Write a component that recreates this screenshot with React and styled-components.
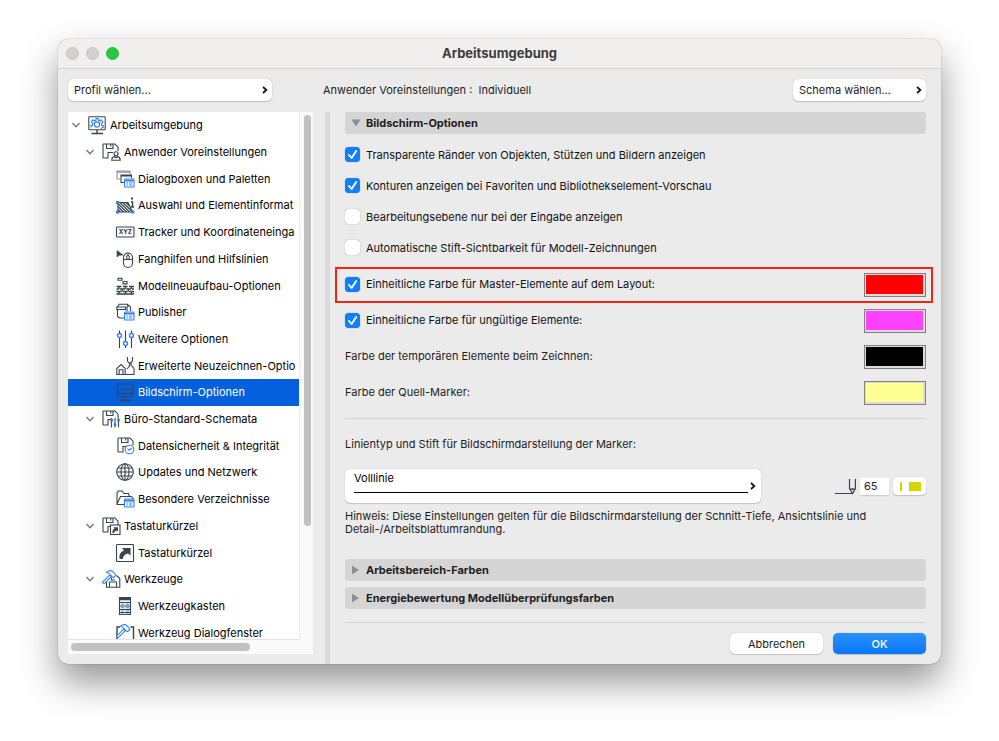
import React, { useState } from 'react'
import styled, { createGlobalStyle } from 'styled-components'

const TEXT_COLOR = '#1d1d1d'
const PANEL_COLOR = '#ebebeb'
const BAR_COLOR = '#d5d5d5'
const LINE_COLOR = '#d3d3d3'
const SELECT_COLOR = '#0560de'
const INK = '#37454c'
const BLUE = '#2f80f7'

const GlobalStyle = createGlobalStyle`
    *{
        box-sizing: border-box;
    }
    body{
        margin: 0;
        background-color: white;
        color: ${TEXT_COLOR};
        font-family: Inter, 'Liberation Sans', sans-serif;
        font-size: 11px;
    }
    button, input, select{
        font: inherit;
        color: inherit;
    }
    ul{
        list-style: none;
        margin: 0;
        padding: 0;
    }
`
const Desktop = styled.div`
    padding: 39px 58px 77px 58px;
`
const Window = styled.main`
    background-color: ${PANEL_COLOR};
    border-radius: 10px;
    overflow: hidden;
    box-shadow: 0 0 1px rgba(0, 0, 0, 0.6), 0 18px 36px rgba(0, 0, 0, 0.42);
`
const TitleBar = styled.header`
    display: grid;
    grid-template-columns: 1fr auto 1fr;
    align-items: center;
    height: 30px;
    padding: 0 8px;
    background-color: #f1efee;
    border-bottom: 1px solid ${LINE_COLOR};

    h1{
        margin: 0;
        padding-bottom: 2px;
        font-size: 13px;
        font-weight: 700;
        color: #3c3c3c;
    }
`
const Lights = styled.div`
    display: flex;
    gap: 7px;
`
const Light = styled.button`
    width: 13px;
    height: 13px;
    padding: 0;
    border-radius: 50%;
    border: 1px solid ${props => props.$on ? '#25bb3c' : '#c4c3c2'};
    background-color: ${props => props.$on ? '#28c840' : '#d3d1d0'};
`
const TopBar = styled.div`
    display: flex;
    align-items: center;
    height: 43px;
    padding: 0 15px 2px 10px;
`
const SelectWrap = styled.div`
    display: grid;
    align-items: center;
    width: ${props => props.$width};
    height: 22px;
    border-radius: 5px;
    background-color: white;
    box-shadow: 0 0 1px rgba(0, 0, 0, 0.3), 0 1px 1px rgba(0, 0, 0, 0.15);

    select, svg{
        grid-area: 1 / 1;
    }
    select{
        appearance: none;
        width: 100%;
        height: 100%;
        border: none;
        background: none;
        padding: 0 20px 0 6px;
    }
    svg{
        justify-self: end;
        margin-right: 4px;
        pointer-events: none;
    }
`
const TopText = styled.span`
    flex: 1;
    padding-left: 51px;
`
const Body = styled.div`
    display: flex;
`
const Sidebar = styled.nav`
    display: grid;
    grid-template-columns: 1fr 14px;
    align-self: flex-start;
    width: 245px;
    margin: 0 12px 10px 10px;
    background-color: #fafafa;
`
const TreeView = styled.div`
    height: 528px;
    overflow: hidden;
    background-color: white;
    border-bottom: 1px solid #e4e4e4;
`
const Tree = styled.ul`
    display: grid;
    grid-auto-rows: 1fr;
    height: 534px;
`
const TreeRow = styled.button`
    display: flex;
    align-items: center;
    gap: 4px;
    width: 100%;
    height: 100%;
    border: none;
    padding: 0 0 0 ${props => 4 + props.$level * 14}px;
    background-color: ${props => props.$selected ? SELECT_COLOR : 'transparent'};
    color: ${props => props.$selected ? 'white' : 'black'};
    white-space: nowrap;
    text-align: left;
`
const Toggle = styled.span`
    display: flex;
    flex: none;
    width: 12px;
`
const Glyph = styled.svg`
    flex: none;
    width: 18px;
    height: 18px;
    overflow: visible;
    fill: none;
    stroke: ${INK};
    stroke-width: 1.1;
`
const VerticalBar = styled.div`
    padding: 3px 2px 0 4px;
    border-left: 1px solid #ececec;

    div{
        height: 411px;
        border-radius: 4px;
        background-color: #c1c1c1;
    }
`
const HorizontalBar = styled.div`
    grid-column: 1 / 3;
    height: 14px;
    padding: 3px;

    div{
        width: 179px;
        height: 8px;
        border-radius: 4px;
        background-color: #c1c1c1;
    }
`
const Splitter = styled.div`
    width: 5px;
    background-color: #dadada;
`
const Content = styled.section`
    flex: 1;
    min-width: 0;
    padding: 0 15px 10px 15px;
`
const SectionButton = styled.button`
    display: flex;
    align-items: center;
    gap: 5px;
    width: 100%;
    height: 22px;
    padding: 0 6px;
    border: none;
    border-radius: 3px;
    background-color: ${BAR_COLOR};
    font-weight: 700;
`
const CheckList = styled.div`
    padding: 5px 0 4px 0;
`
const CheckRow = styled.label`
    display: flex;
    align-items: center;
    gap: 6px;
    height: 31px;
    color: #111;
`
const CheckBox = styled.input`
    appearance: none;
    flex: none;
    width: 15px;
    height: 15px;
    margin: 0;
    border-radius: 4px;
    background-color: white;
    box-shadow: 0 0 1px rgba(0, 0, 0, 0.5);

    &:checked{
        background: url("data:image/svg+xml,%3Csvg xmlns='http://www.w3.org/2000/svg' viewBox='0 0 15 15'%3E%3Cpath d='M4 8l2.600 3L11.200 4' fill='none' stroke='white' stroke-width='1.900' stroke-linecap='round' stroke-linejoin='round'/%3E%3C/svg%3E"), #0f80fb;
    }
`
const ColorRow = styled.div`
    display: flex;
    align-items: center;
    justify-content: space-between;
    height: 36px;
    ${props => props.$marked && `
        margin: 0 -7px 0 -10px;
        padding: 0 5px 0 8px;
        border: 2px solid #f52313;
    `}

    label{
        padding-bottom: 2px;
    }
`
const Swatch = styled.input`
    appearance: none;
    width: 62px;
    height: 24px;
    padding: 1px 2px 2px 1px;
    border: 1px solid #808080;
    background-color: #dcdcdc;

    &::-webkit-color-swatch-wrapper{
        padding: 0;
    }
    &::-webkit-color-swatch{
        border: none;
    }
`
const Divider = styled.hr`
    height: 1px;
    border: none;
    margin: ${props => props.$gap} 0 0 0;
    background-color: ${LINE_COLOR};
`
const LineLabel = styled.p`
    margin: 17px 0;
    line-height: 16px;
`
const LineRow = styled.div`
    display: flex;
    align-items: center;
    gap: 74px;
`
const LineButton = styled.button`
    display: flex;
    align-items: center;
    gap: 2px;
    flex: 1;
    height: 34px;
    padding: 0 5px 0 9px;
    border: none;
    border-radius: 5px;
    background-color: white;
    box-shadow: 0 0 1px rgba(0, 0, 0, 0.3), 0 1px 1px rgba(0, 0, 0, 0.15);
    color: black;
    text-align: left;

    span{
        flex: 1;
        padding-bottom: 7px;
        margin-bottom: 8px;
        border-bottom: 1px solid black;
        line-height: 14px;
    }
`
const PenGroup = styled.div`
    display: flex;
    align-items: center;
    gap: 4px;
`
const PenInput = styled.input`
    width: 29px;
    height: 17px;
    padding: 0 4px;
    border: none;
    background-color: white;
    box-shadow: 0 1px 1px rgba(0, 0, 0, 0.12);
`
const PenButton = styled.button`
    display: flex;
    align-items: center;
    justify-content: flex-end;
    gap: 7px;
    width: 33px;
    height: 18px;
    padding: 0 5px;
    border: none;
    border-radius: 4px;
    background-color: white;
    box-shadow: 0 0 1px rgba(0, 0, 0, 0.3), 0 1px 1px rgba(0, 0, 0, 0.15);
`
const PenColor = styled.span`
    width: ${props => props.$width};
    height: 9px;
    background-color: #d8d400;
`
const Hint = styled.p`
    margin: 7px 0 23px 0;
    line-height: 13px;
`
const SectionGroup = styled.div`
    display: flex;
    flex-direction: column;
    gap: 6px;
`
const Footer = styled.footer`
    display: flex;
    justify-content: flex-end;
    gap: 10px;
    padding-top: 10px;
`
const FooterButton = styled.button`
    width: 93px;
    height: 21px;
    border: none;
    border-radius: 5px;
    background: ${props => props.$primary ? 'linear-gradient(#2a90ff, #0a78fb)' : 'white'};
    color: ${props => props.$primary ? 'white' : TEXT_COLOR};
    font-weight: ${props => props.$primary ? 500 : 400};
    box-shadow: 0 0 1px rgba(0, 0, 0, 0.3), 0 1px 1px rgba(0, 0, 0, 0.15);
`

const Chevron = () => (
    <svg width='6' height='8' viewBox='0 0 6 8' fill='none' stroke='#111' strokeWidth='1.7'>
        <path d='M1 1l3.400 3L1 7' />
    </svg>
)

const Triangle = ({ open }) => (
    <svg width='10' height='10' viewBox='0 0 10 10' fill='#8b9094'>
        <path d={open ? 'M0.500 1.500h9L5 8.500z' : 'M1 0.500v9L8 5z'} />
    </svg>
)

const Floppy = () => (
    <path d='M16 8V4.200L13 1H1.600Q1 1 1 1.600V14.400Q1 15 1.600 15H6V9.500H11M4.500 1V5.500H11V1M8.800 1V3.500' />
)

const BlueWindow = () => (
    <g stroke={BLUE} fill='#fff'>
        <rect x='8.500' y='9' width='9.500' height='8' rx='0.800' />
        <path d='M8.500 10.600H18' strokeWidth='1.800' />
        <path d='M10.300 13h1.500M12.800 13h3.500M10.300 15h1.500M12.800 15h3.500' />
    </g>
)

const Hammer = () => (
    <g stroke={BLUE} fill='#fff'>
        <path d='M7.700 5.200L0.500 12.200L2 13.800L9.300 6.700z' />
        <path d='M4.500 2.200Q7.500 -0.500 10.500 1.300L13.300 4.200L13.800 5.500L11.700 7.600L10.300 7L7 3.600Q5.800 2.500 4.500 2.200z' />
    </g>
)

const GLYPHS = {
    monitorGear: (
        <>
            <rect x='0.800' y='0.800' width='16.400' height='13' rx='0.800' />
            <path d='M9 14v3.500M3.500 17.500h11.500' strokeWidth='1.400' />
            <g stroke={BLUE}>
                <circle cx='9' cy='8.500' r='2.600' />
                <path d='M3 11.500V9.500H4.500L5 7.500L3.300 6L5 3.800L6.800 5L8 4.300V2.500H10.300V4.300L11.500 5L13 3.800L15 6L13.300 7.500L13.700 9.500H15.200V11.500L13.500 12L13 13' />
            </g>
        </>
    ),
    floppyUser: (
        <>
            <Floppy />
            <circle cx='14' cy='10.700' r='2' fill='#fff' />
            <path d='M9.800 17.200Q9.600 14 12.500 13.600L14 14.800L15.500 13.600Q18.300 14 18.200 17.200z' fill='#fff' />
        </>
    ),
    dialogs: (
        <>
            <path d='M4 9H1V1H14V4' stroke='#8b9497' />
            <path d='M1 2h13' stroke='#8b9497' strokeWidth='1.600' />
            <path d='M8 12.500H5V5H15.500V8' />
            <path d='M5 5.800h10.500' strokeWidth='1.600' />
            <BlueWindow />
        </>
    ),
    hatch: (
        <>
            <path d='M1.500 6.500H12L16.500 16H2V6.500' />
            <path d='M2 13.500L4.500 16M2 10.500L7.500 16M2 7.500L10.500 16M4 6.500L13.500 16M7 6.500L16 15.500M10 6.500L14 10.500' strokeWidth='1.200' />
            <path d='M16.500 5.500v5.500M15 5.800h1.500M15 11h3' strokeWidth='1.500' />
            <path d='M16 1.500v2' strokeWidth='2' />
            <path d='M1.500 5v3M1.500 14.500v3M16.800 14.500v3' stroke={BLUE} strokeWidth='3' />
        </>
    ),
    xyz: (
        <>
            <rect x='0.500' y='4' width='17.500' height='10' rx='0.800' />
            <text x='9.300' y='11.200' textAnchor='middle' fontSize='6' fontWeight='800' fill={INK} stroke='none'>XYZ</text>
        </>
    ),
    mouse: (
        <>
            <path d='M1 0.500V7L3 5.300L7 5z' fill={INK} strokeWidth='0.600' />
            <rect x='7.500' y='3' width='9' height='14.500' rx='4.500' />
            <path d='M7.500 9.500h9M12 3v2.500' />
            <rect x='10.700' y='5.500' width='2.600' height='4' rx='1.300' />
        </>
    ),
    bricks: (
        <>
            <path d='M2 1.200h4v2h-4zM7 4.500h4v2.400h-4z' />
            <path d='M0.500 9.500H5.500M7 9.500h4.500M13 9.500h5M0.500 12h2.500M4 12h5M10.500 12h4.500M16 12h2M0.500 14.500H5.500M7 14.500h4.500M13 14.500h5M0.500 17h17.500M3 9.500V12M9.500 9.500V12M15.500 9.500V12M6.200 12v2.500M12.300 12v2.500M3 14.500V17M9.500 14.500V17M15.500 14.500V17' strokeWidth='1.400' />
        </>
    ),
    publisher: (
        <>
            <path d='M1.500 4L3 1.300H11.500L12 4M0.800 4H9.500V6.500H0.800zM1.500 6.500V13.500L3.500 15H8M11.500 1.300L14.500 4V8M11 3.500V8' />
            <BlueWindow />
        </>
    ),
    sliders: (
        <>
            <path d='M3.500 0.500V18M9.500 0.500V18M15.500 0.500V18' />
            <g stroke={BLUE} fill='#fff' strokeWidth='1.300'>
                <circle cx='3.500' cy='5.500' r='2' />
                <circle cx='9.500' cy='13.500' r='2' />
                <circle cx='15.500' cy='5.500' r='2' />
            </g>
        </>
    ),
    redraw: (
        <>
            <path d='M0.800 17.500V11.500L5 7.500L9.200 11.500V17.500zM3.200 17.500V12.800H7V17.500' />
            <path d='M9.200 17.500H18V11.500L15 8V5.500M11.500 0V4L13.500 6.500L16.500 4V0M13.500 6.500V9L11 12' />
        </>
    ),
    monitor: (
        <>
            <rect x='1.300' y='1' width='15.500' height='12.500' rx='0.800' />
            <path d='M3.500 6.500h11' strokeOpacity='0.6' strokeWidth='1.600' />
            <path d='M1.500 10.500h15' />
            <path d='M9 13.500v4M4 17.500h10.500' strokeWidth='1.400' />
        </>
    ),
    floppySliders: (
        <>
            <Floppy />
            <path d='M9.500 8V17.500M13 8V17.500M16.500 8V17.500' />
            <path d='M9.500 9v2.500M13 13.500v2.500M16.500 9v2.500' stroke={BLUE} strokeWidth='2.600' />
        </>
    ),
    floppyClock: (
        <>
            <g transform='translate(1 0)'><Floppy /></g>
            <circle cx='13.500' cy='12.500' r='4.300' stroke={BLUE} fill='#fff' />
            <path d='M11.500 11.500L13 13.200L16 11' stroke={BLUE} />
        </>
    ),
    globe: (
        <>
            <circle cx='9' cy='9' r='8.300' />
            <ellipse cx='9' cy='9' rx='4' ry='8.300' />
            <path d='M9 0.700V17.300M0.700 9H17.300M2 5H16M2 13H16' />
        </>
    ),
    folder: (
        <>
            <path d='M9 14.500H1V2.500L2.500 1H6L8 3.500H12.500L13.500 6.500M1 14L4.500 6.500H15.500L17.500 9' />
            <BlueWindow />
        </>
    ),
    floppyKey: (
        <>
            <Floppy />
            <rect x='8.500' y='8' width='9.500' height='9.500' fill='#fff' />
            <path d='M10.500 16Q10 12.500 12.500 11.500L11.500 10.300H16V14.500L14.800 13.500Q12.500 13.800 12 16z' fill={INK} stroke='none' />
        </>
    ),
    key: (
        <>
            <rect x='0.500' y='0.500' width='17' height='17' rx='0.800' />
            <path d='M3.500 15Q2.500 8.500 8 6.500L6 4H14.500V11.500L12 9.500Q7 10.500 6.800 15z' fill={INK} stroke='none' />
        </>
    ),
    hammerFloppy: (
        <>
            <path d='M4.500 11V17.200H17.800V8.500L14.500 5.500M7.500 17V12H14.500V17M9.500 7.500V10H13' />
            <Hammer />
        </>
    ),
    toolbox: (
        <>
            <path d='M3.500 0.500H14.500V17.500H3.500z' />
            <path d='M3.500 2h11' strokeWidth='2.600' />
            <path d='M3.500 5.500h11M3.500 9h11M3.500 12.500h11M3.500 15.500h11' />
            <path d='M5.200 7.300h2.600M9.500 7.300h3.500M5.200 10.800h2.600M9.500 10.800h3.500M5.200 14h2.600M9.500 14h3.500M5.200 17h2.600M9.500 17h3.500' stroke={BLUE} />
        </>
    ),
    hammerDialog: (
        <>
            <path d='M4 3H1V17M14.500 3H17.500V17' strokeWidth='1.400' />
            <Hammer />
        </>
    ),
}

const TREE = [
    { level: 0, icon: 'monitorGear', name: 'Arbeitsumgebung' },
    { level: 1, icon: 'floppyUser', name: 'Anwender Voreinstellungen' },
    { level: 2, icon: 'dialogs', name: 'Dialogboxen und Paletten' },
    { level: 2, icon: 'hatch', name: 'Auswahl und Elementinformat' },
    { level: 2, icon: 'xyz', name: 'Tracker und Koordinateneinga' },
    { level: 2, icon: 'mouse', name: 'Fanghilfen und Hilfslinien' },
    { level: 2, icon: 'bricks', name: 'Modellneuaufbau-Optionen' },
    { level: 2, icon: 'publisher', name: 'Publisher' },
    { level: 2, icon: 'sliders', name: 'Weitere Optionen' },
    { level: 2, icon: 'redraw', name: 'Erweiterte Neuzeichnen-Optio' },
    { level: 2, icon: 'monitor', name: 'Bildschirm-Optionen' },
    { level: 1, icon: 'floppySliders', name: 'Büro-Standard-Schemata' },
    { level: 2, icon: 'floppyClock', name: 'Datensicherheit & Integrität' },
    { level: 2, icon: 'globe', name: 'Updates und Netzwerk' },
    { level: 2, icon: 'folder', name: 'Besondere Verzeichnisse' },
    { level: 1, icon: 'floppyKey', name: 'Tastaturkürzel' },
    { level: 2, icon: 'key', name: 'Tastaturkürzel' },
    { level: 1, icon: 'hammerFloppy', name: 'Werkzeuge' },
    { level: 2, icon: 'toolbox', name: 'Werkzeugkasten' },
    { level: 2, icon: 'hammerDialog', name: 'Werkzeug Dialogfenster' },
]

const CHECKS = [
    { name: 'Transparente Ränder von Objekten, Stützen und Bildern anzeigen', on: true },
    { name: 'Konturen anzeigen bei Favoriten und Bibliothekselement-Vorschau', on: true },
    { name: 'Bearbeitungsebene nur bei der Eingabe anzeigen', on: false },
    { name: 'Automatische Stift-Sichtbarkeit für Modell-Zeichnungen', on: false },
]

const COLORS = [
    { id: 'master', name: 'Einheitliche Farbe für Master-Elemente auf dem Layout:', color: '#ff0000', check: true, marked: true },
    { id: 'invalid', name: 'Einheitliche Farbe für ungültige Elemente:', color: '#ff40ff', check: true },
    { id: 'temp', name: 'Farbe der temporären Elemente beim Zeichnen:', color: '#000000' },
    { id: 'source', name: 'Farbe der Quell-Marker:', color: '#ffff94' },
]

export default () => {
    const [selected, setSelected] = useState(10)
    return (
        <Desktop>
            <GlobalStyle />
            <Window>
                <TitleBar>
                    <Lights>
                        <Light aria-label='Schließen' />
                        <Light aria-label='Minimieren' />
                        <Light aria-label='Zoomen' $on />
                    </Lights>
                    <h1>Arbeitsumgebung</h1>
                </TitleBar>
                <TopBar>
                    <SelectWrap $width='204px'>
                        <select aria-label='Profil'>
                            <option>Profil wählen...</option>
                        </select>
                        <Chevron />
                    </SelectWrap>
                    <TopText>Anwender Voreinstellungen :&nbsp; Individuell</TopText>
                    <SelectWrap $width='133px'>
                        <select aria-label='Schema'>
                            <option>Schema wählen...</option>
                        </select>
                        <Chevron />
                    </SelectWrap>
                </TopBar>
                <Body>
                    <Sidebar>
                        <TreeView>
                            <Tree>
                                {TREE.map((item, index) => (
                                    <li key={index}>
                                        <TreeRow
                                            type='button'
                                            $level={item.level}
                                            $selected={index === selected}
                                            onClick={() => {
                                                setSelected(index)
                                            }}>
                                            <Toggle>
                                                {item.level < 2 && (
                                                    <svg width='8' height='6' viewBox='0 0 8 6' fill='none' stroke='#767676' strokeWidth='1.300'>
                                                        <path d='M0.500 1L4 4.800L7.500 1' />
                                                    </svg>
                                                )}
                                            </Toggle>
                                            <Glyph viewBox='0 0 18 18'>{GLYPHS[item.icon]}</Glyph>
                                            <span>{item.name}</span>
                                        </TreeRow>
                                    </li>
                                ))}
                            </Tree>
                        </TreeView>
                        <VerticalBar><div /></VerticalBar>
                        <HorizontalBar><div /></HorizontalBar>
                    </Sidebar>
                    <Splitter />
                    <Content>
                        <SectionButton type='button'>
                            <Triangle open />
                            Bildschirm-Optionen
                        </SectionButton>
                        <CheckList>
                            {CHECKS.map(item => (
                                <CheckRow key={item.name}>
                                    <CheckBox type='checkbox' defaultChecked={item.on} />
                                    {item.name}
                                </CheckRow>
                            ))}
                        </CheckList>
                        {COLORS.map(item => (
                            <ColorRow key={item.id} $marked={item.marked}>
                                {item.check ? (
                                    <CheckRow>
                                        <CheckBox type='checkbox' defaultChecked />
                                        {item.name}
                                    </CheckRow>
                                ) : (
                                    <label htmlFor={item.id}>{item.name}</label>
                                )}
                                <Swatch type='color' id={item.id} aria-label={item.name} defaultValue={item.color} />
                            </ColorRow>
                        ))}
                        <Divider $gap='7px' />
                        <LineLabel>Linientyp und Stift für Bildschirmdarstellung der Marker:</LineLabel>
                        <LineRow>
                            <LineButton type='button' aria-haspopup='listbox'>
                                <span>Volllinie</span>
                                <Chevron />
                            </LineButton>
                            <PenGroup>
                                <svg width='21' height='17' viewBox='0 0 21 17' fill='none' stroke={INK} strokeWidth='1.200'>
                                    <path d='M0 15.500H17M14.500 1V10.500L17.500 15.500L20.400 10.500V1M14.500 10.500Q16 12 17.500 10.500Q19 12 20.400 10.500' />
                                </svg>
                                <PenInput type='text' aria-label='Stift' defaultValue='65' />
                                <PenButton type='button' aria-label='Stiftfarbe'>
                                    <PenColor $width='2px' />
                                    <PenColor $width='12px' />
                                </PenButton>
                            </PenGroup>
                        </LineRow>
                        <Hint>
                            Hinweis: Diese Einstellungen gelten für die Bildschirmdarstellung der Schnitt-Tiefe, Ansichtslinie und Detail-/Arbeitsblattumrandung.
                        </Hint>
                        <SectionGroup>
                            <SectionButton type='button'>
                                <Triangle />
                                Arbeitsbereich-Farben
                            </SectionButton>
                            <SectionButton type='button'>
                                <Triangle />
                                Energiebewertung Modellüberprüfungsfarben
                            </SectionButton>
                        </SectionGroup>
                        <Divider $gap='13px' />
                        <Footer>
                            <FooterButton type='button'>Abbrechen</FooterButton>
                            <FooterButton type='button' $primary>OK</FooterButton>
                        </Footer>
                    </Content>
                </Body>
            </Window>
        </Desktop>
    )
}
